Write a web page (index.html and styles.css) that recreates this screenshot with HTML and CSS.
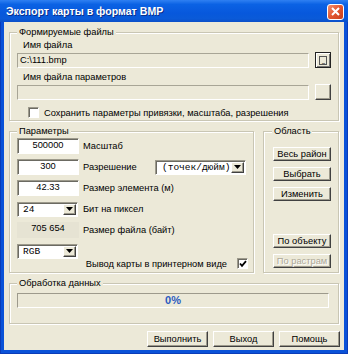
FILE: index.html
```html
<!DOCTYPE html>
<html lang="ru">
<head>
<meta charset="utf-8">
<title>Экспорт карты в формат BMP</title>
<link rel="stylesheet" href="styles.css">
</head>
<body>
<div class="window">
  <div class="titlebar">
    <span class="title">Экспорт карты в формат BMP</span>
    <span class="close"><svg width="9" height="9" viewBox="0 0 9 9"><path d="M1 1L8 8M8 1L1 8" stroke="#fff" stroke-width="2"/></svg></span>
  </div>
  <div class="body">
    <div class="group g-files">
      <div class="legend">Формируемые файлы</div>
      <div class="lbl">Имя файла</div>
      <div class="frow">
        <div class="field ro">C:\111.bmp</div>
        <div class="btn sq focus"><span class="dots">...</span></div>
      </div>
      <div class="lbl lbl2">Имя файла параметров</div>
      <div class="frow frow2">
        <div class="field ro"></div>
        <div class="btn sq"></div>
      </div>
      <div class="chk"><span class="cbox"></span><span>Сохранить параметры привязки, масштаба, разрешения</span></div>
    </div>

    <div class="mid">
      <div class="group g-params">
        <div class="legend">Параметры</div>
        <div class="pgrid">
          <div class="field num">500000</div><div class="plbl">Масштаб</div>
          <div class="field num">300</div>
          <div class="plbl with-combo"><span>Разрешение</span>
            <div class="combo wide"><span class="cval">(точек/дюйм)</span><span class="arrow"><svg width="7" height="4" viewBox="0 0 7 4"><path d="M0 0H7L3.5 4Z" fill="#000"/></svg></span></div>
          </div>
          <div class="field num">42.33</div><div class="plbl">Размер элемента (м)</div>
          <div class="combo"><span class="cval">24</span><span class="arrow"><svg width="7" height="4" viewBox="0 0 7 4"><path d="M0 0H7L3.5 4Z" fill="#000"/></svg></span></div><div class="plbl">Бит на пиксел</div>
          <div class="field num flat">705 654</div><div class="plbl">Размер файла (байт)</div>
          <div class="combo"><span class="cval">RGB</span><span class="arrow"><svg width="7" height="4" viewBox="0 0 7 4"><path d="M0 0H7L3.5 4Z" fill="#000"/></svg></span></div><div></div>
        </div>
        <div class="chk right"><span>Вывод карты в принтерном виде</span><span class="cbox checked"><svg width="8" height="8" viewBox="0 0 8 8"><path d="M1 3.5L3 5.8L7 1.2" stroke="#000" stroke-width="1.8" fill="none"/></svg></span></div>
      </div>
      <div class="group g-area">
        <div class="legend">Область</div>
        <div class="btn small">Весь район</div>
        <div class="btn small">Выбрать</div>
        <div class="btn small">Изменить</div>
        <div class="btn small push">По объекту</div>
        <div class="btn small disabled">По растрам</div>
      </div>
    </div>

    <div class="group g-proc">
      <div class="legend">Обработка данных</div>
      <div class="progress">0%</div>
    </div>

    <div class="actions">
      <div class="btn act">Выполнить</div>
      <div class="btn act">Выход</div>
      <div class="btn act">Помощь</div>
    </div>
  </div>
</div>
</body>
</html>
```

FILE: styles.css
```css
* { box-sizing: border-box; }
html, body { margin: 0; padding: 0; }
body {
  width: 348px;
  height: 354px;
  overflow: hidden;
  font-family: "Liberation Sans", Arial, sans-serif;
  font-size: 9.3px;
  color: #000;
  background: #fff;
}
.window {
  width: 348px;
  height: 354px;
  background: #0a52d8;
  display: flex;
  flex-direction: column;
  border-left: 1px solid #0a3cb8;
  border-right: 1px solid #0a3cb8;
  border-bottom: 1px solid #0a3cb8;
}
.titlebar {
  height: 22px;
  flex: none;
  display: flex;
  align-items: center;
  justify-content: space-between;
  padding: 0 4px 0 6px;
  background: linear-gradient(#2f80f2 0%, #0b62e4 20%, #0758dc 60%, #0a5ad8 85%, #0b4fc8 100%);
  margin: 0 -1px;
}
.title {
  color: #fff;
  font-weight: bold;
  font-size: 10.6px;
  text-shadow: 1px 1px 0 #0a2f8a;
}
.close {
  width: 17px;
  height: 16px;
  border: 1px solid #fff;
  border-radius: 3px;
  background: linear-gradient(135deg, #f39070 0%, #e2552e 50%, #c8401c 100%);
  display: flex;
  align-items: center;
  justify-content: center;
  margin-top: 1px;
}
.body {
  flex: 1;
  margin: 0 3px 3px 3px;
  background: #ece9d8;
  padding: 10px 5px 0 5px;
  display: flex;
  flex-direction: column;
}
.group {
  border: 1px solid #c9c6b4;
  box-shadow: inset 1px 1px 0 #fff, 1px 1px 0 #fff;
  padding: 0 7px;
}
.legend {
  width: fit-content;
  margin: -7px 0 0 0;
  padding: 0 2px;
  background: #ece9d8;
  line-height: 13px;
  height: 13px;
  color: #000;
}
.g-files { height: 89px; }
.lbl { line-height: 13px; padding-left: 6px; }
.lbl2 { margin-top: 3px; }
.frow { display: flex; align-items: center; gap: 6px; height: 16px; }
.field {
  height: 15px;
  border: 1px solid;
  border-color: #9d9a8c #fff #fff #9d9a8c;
  box-shadow: inset 1px 1px 0 #6b6a62;
  background: #fff;
  line-height: 13px;
  padding: 0 2px;
}
.frow .field { flex: 1; background: #ece9d8; box-shadow: none; border-color: #a8a596 #fff #fff #a8a596; }
.btn {
  background: #ece9d8;
  border: 1px solid;
  border-color: #fff #404040 #404040 #fff;
  box-shadow: inset -1px -1px 0 #9d9a8c;
  display: flex;
  align-items: center;
  justify-content: center;
  line-height: 12px;
  white-space: nowrap;
}
.sq { width: 16px; height: 16px; flex: none; }
.sq.focus { border: 1px solid #222; box-shadow: inset 1px 1px 0 #fff, inset -1px -1px 0 #777; }
.dots {
  display: block;
  width: 8px;
  height: 9px;
  border: 1px solid #555;
  font-size: 7px;
  line-height: 10px;
  text-align: center;
  letter-spacing: -1px;
  overflow: hidden;
}
.chk { display: flex; align-items: center; gap: 5px; height: 13px; margin-top: 6px; margin-left: 11px; }
.cbox {
  width: 11px;
  height: 11px;
  flex: none;
  background: #fff;
  border: 1px solid;
  border-color: #9d9a8c #fff #fff #9d9a8c;
  box-shadow: inset 1px 1px 0 #6b6a62;
  display: flex;
  align-items: center;
  justify-content: center;
}
.mid {
  display: flex;
  gap: 9px;
  margin-top: 10px;
  height: 142px;
}
.g-params { width: 245px; }
.g-area {
  width: 76px;
  padding: 0 7px 4px 9px;
  display: flex;
  flex-direction: column;
  gap: 6px;
}
.g-area .legend { margin-bottom: 3px; margin-left: -1px; }
.pgrid {
  display: grid;
  grid-template-columns: 62px 1fr;
  grid-auto-rows: 16px;
  column-gap: 4px;
  row-gap: 5px;
  align-items: center;
}
.num { text-align: center; height: 16px; }
.flat { border: none; box-shadow: none; background: #e6e3d3; }
.plbl { line-height: 13px; }
.with-combo { display: flex; align-items: center; justify-content: space-between; }
.combo {
  height: 15px;
  width: 61px;
  display: flex;
  align-items: stretch;
  background: #fff;
  border: 1px solid;
  border-color: #9d9a8c #fff #fff #9d9a8c;
  box-shadow: inset 1px 1px 0 #6b6a62;
  padding: 1px;
}
.combo.wide { width: 91px; }
.cval {
  flex: 1;
  font-family: "Liberation Mono", "Courier New", monospace;
  font-size: 9.5px;
  line-height: 12px;
  padding-left: 4px;
}
.wide .cval { padding-left: 5px; }
.arrow {
  width: 13px;
  flex: none;
  background: #ece9d8;
  border: 1px solid;
  border-color: #fff #404040 #404040 #fff;
  box-shadow: inset -1px -1px 0 #9d9a8c;
  display: flex;
  align-items: center;
  justify-content: center;
}
.chk.right { justify-content: flex-end; margin: -2px -2px 0 0; gap: 10px; }
.small { width: 58px; height: 14px; flex: none; }
.push { margin-top: auto; }
.disabled { color: #aca899; text-shadow: 1px 1px 0 #fff; }
.g-proc { margin-top: 10px; height: 41px; }
.progress {
  margin-top: 3px;
  width: 312px;
  height: 15px;
  border: 1px solid;
  border-color: #9d9a8c #fff #fff #9d9a8c;
  background: #ece9d8;
  text-align: center;
  color: #2a5bc0;
  font-weight: bold;
  font-size: 11px;
  line-height: 13px;
}
.actions {
  display: flex;
  justify-content: flex-end;
  gap: 5px;
  margin: 7px -1px 0 0;
}
.act { width: 61px; height: 16px; }
```
